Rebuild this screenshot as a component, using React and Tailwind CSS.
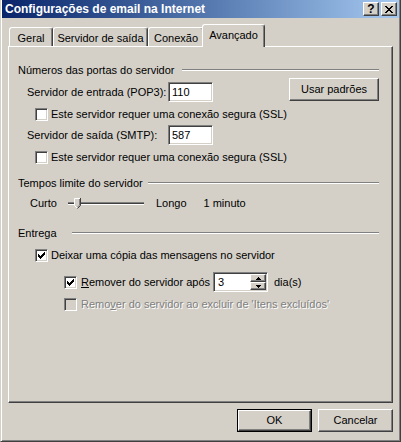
import React from 'react';

const raised = 'border border-t-white border-l-white border-r-[#404040] border-b-[#404040] shadow-[inset_-1px_-1px_0_#808080]';
const sunken = 'border border-t-[#808080] border-l-[#808080] border-r-white border-b-white shadow-[inset_1px_1px_0_#404040,inset_-1px_-1px_0_#d4d0c8]';

const Check = ({ checked, disabled }) => (
  <div className={`w-[13px] h-[13px] shrink-0 flex items-center justify-center ${sunken} ${disabled ? 'bg-[#d4d0c8]' : 'bg-white'}`}>
    {checked && (
      <svg width="7" height="7" viewBox="0 0 7 7" shapeRendering="crispEdges">
        <path d="M0 2h1v3H0zM1 3h1v3H1zM2 4h1v3H2zM3 3h1v3H3zM4 2h1v3H4zM5 1h1v3H5zM6 0h1v3H6z" fill="#000" />
      </svg>
    )}
  </div>
);

const GroupHeader = ({ title, w, className = '' }) => (
  <div className={`flex items-center h-[14px] ${className}`}>
    <span className={`${w} shrink-0`}>{title}</span>
    <div className="flex-1 h-[2px] border-t border-t-[#808080] border-b border-b-white" />
  </div>
);

const Tab = ({ label, w }) => (
  <div className={`${w} h-[19px] pt-[3px] flex items-center justify-center border-t border-l border-r border-t-white border-l-white border-r-[#404040] shadow-[inset_-1px_0_0_#808080] rounded-t-[3px]`}>
    {label}
  </div>
);

const Arrow = ({ up }) => (
  <svg width="5" height="3" viewBox="0 0 5 3" shapeRendering="crispEdges">
    {up ? <path d="M2 0h1v1H2zM1 1h3v1H1zM0 2h5v1H0z" fill="#000" /> : <path d="M0 0h5v1H0zM1 1h3v1H1zM2 2h1v1H2z" fill="#000" />}
  </svg>
);

export default function App() {
  return (
    <div className="w-[401px] h-[442px] bg-[#d4d0c8] flex flex-col border-x border-b border-l-[#d4d0c8] border-r-[#404040] border-b-[#404040] px-px pb-px shadow-[inset_1px_0_0_#fff,inset_-1px_-1px_0_#808080] [font-family:'Liberation_Sans',Arial,sans-serif] text-[11px] leading-[13px] text-black">
      {/* barra de título */}
      <div className="h-[18px] shrink-0 flex items-center bg-linear-to-r from-[#0a246a] to-[#a6caf0] pl-[3px] pr-[2px]">
        <span className="text-white font-bold text-[12px] leading-[14px]">Configurações de email na Internet</span>
        <div className="ml-auto flex gap-[2px]">
          <div className={`w-[16px] h-[14px] bg-[#d4d0c8] flex items-center justify-center font-bold text-[12px] leading-[12px] ${raised}`}>?</div>
          <div className={`w-[16px] h-[14px] bg-[#d4d0c8] flex items-center justify-center ${raised}`}>
            <svg width="8" height="7" viewBox="0 0 8 7" shapeRendering="crispEdges">
              <path d="M0 0h2v1H0zM6 0h2v1H6zM1 1h2v1H1zM5 1h2v1H5zM2 2h4v1H2zM3 3h2v1H3zM2 4h4v1H2zM1 5h2v1H1zM5 5h2v1H5zM0 6h2v1H0zM6 6h2v1H6z" fill="#000" />
            </svg>
          </div>
        </div>
      </div>

      {/* abas */}
      <div className="flex items-end h-[22px] mt-[6px] pl-[7px] shrink-0">
        <Tab label="Geral" w="w-[44px]" />
        <Tab label="Servidor de saída" w="w-[95px]" />
        <Tab label="Conexão" w="w-[56px]" />
        <div className="relative z-10 -ml-[2px] -mb-[1px] w-[63px] h-[23px] pb-[1px] bg-[#d4d0c8] flex items-center justify-center border-t border-l border-r border-t-white border-l-white border-r-[#404040] shadow-[inset_-1px_0_0_#808080] rounded-t-[3px]">
          Avançado
        </div>
      </div>

      {/* painel */}
      <div className="ml-[6px] mr-[6px] h-[357px] shrink-0 flex flex-col pt-[16px] pl-[9px] pr-[13px] border border-t-white border-l-white border-r-[#404040] border-b-[#404040] shadow-[inset_-1px_-1px_0_#808080]">
        <GroupHeader title="Números das portas do servidor" w="w-[164px]" />

        <div className="flex mt-[1px]">
          <div className="flex items-center h-[20px] mt-[4px] pl-[9px]">
            <span className="w-[141px]">Servidor de entrada (POP3):</span>
            <div className={`w-[45px] h-[20px] bg-white pl-[3px] flex items-center ${sunken}`}>110</div>
          </div>
          <div className={`ml-auto w-[90px] h-[23px] flex items-center justify-center ${raised}`}>Usar padrões</div>
        </div>

        <div className="flex items-center h-[13px] mt-[6px] pl-[17px]">
          <Check />
          <span className="ml-[3px]">Este servidor requer uma conexão segura (SSL)</span>
        </div>

        <div className="flex items-center h-[20px] mt-[4px] pl-[9px]">
          <span className="w-[141px]">Servidor de saída (SMTP):</span>
          <div className={`w-[45px] h-[20px] bg-white pl-[3px] flex items-center ${sunken}`}>587</div>
        </div>

        <div className="flex items-center h-[13px] mt-[6px] pl-[17px]">
          <Check />
          <span className="ml-[3px]">Este servidor requer uma conexão segura (SSL)</span>
        </div>

        <GroupHeader title="Tempos limite do servidor" w="w-[130px]" className="mt-[12px]" />

        <div className="flex items-center h-[14px] mt-[6px] pl-[12px]">
          <span>Curto</span>
          <div className="relative ml-[6px] w-[86px] h-[14px] flex items-center">
            <div className="mx-[5px] flex-1 h-[3px] border-t border-t-[#808080] border-b border-b-white bg-[#404040]" />
            <svg className="absolute left-[11px] top-[2px]" width="7" height="11" viewBox="0 0 7 11">
              <path d="M0.5 0.5H6.5V7.5L3.5 10.5L0.5 7.5Z" fill="#d4d0c8" />
              <path d="M0.5 7.5V0.5H6" stroke="#fff" fill="none" />
              <path d="M6.5 0V7.5L3.5 10.5" stroke="#404040" fill="none" />
              <path d="M5.5 1V7.1L3.5 9.1" stroke="#808080" fill="none" />
              <path d="M0.5 7.5L3 10" stroke="#fff" fill="none" />
            </svg>
          </div>
          <span className="ml-[7px]">Longo</span>
          <span className="ml-[17px]">1 minuto</span>
        </div>

        <GroupHeader title="Entrega" w="w-[54px]" className="mt-[16px]" />

        <div className="flex items-center h-[13px] mt-[9px] pl-[17px]">
          <Check checked />
          <span className="ml-[3px]">Deixar uma cópia das mensagens no servidor</span>
        </div>

        <div className="flex items-center h-[20px] mt-[10px] pl-[46px]">
          <Check checked />
          <span className="ml-[4px] w-[132px] shrink-0"><span className="underline">R</span>emover do servidor após</span>
          <div className={`w-[55px] h-[20px] bg-white p-px flex ${sunken}`}>
            <div className="flex-1 pl-[3px] flex items-center">3</div>
            <div className="w-[16px] flex flex-col">
              <div className={`h-[8px] bg-[#d4d0c8] flex items-center justify-center ${raised}`}><Arrow up /></div>
              <div className={`h-[8px] bg-[#d4d0c8] flex items-center justify-center ${raised}`}><Arrow /></div>
            </div>
          </div>
          <span className="ml-[6px]">dia(s)</span>
        </div>

        <div className="flex items-center h-[13px] mt-[6px] pl-[46px]">
          <Check disabled />
          <span className="ml-[4px] text-[#808080] [text-shadow:1px_1px_0_#fff]">
            Remo<span className="underline">v</span>er do servidor ao excluir de 'Itens excluídos'
          </span>
        </div>
      </div>

      {/* botões */}
      <div className="flex justify-end gap-[6px] mt-[6px] pr-[6px]">
        <div className="w-[75px] h-[23px] border border-black">
          <div className={`w-full h-full flex items-center justify-center ${raised}`}>OK</div>
        </div>
        <div className={`w-[75px] h-[23px] flex items-center justify-center ${raised}`}>Cancelar</div>
      </div>
    </div>
  );
}
